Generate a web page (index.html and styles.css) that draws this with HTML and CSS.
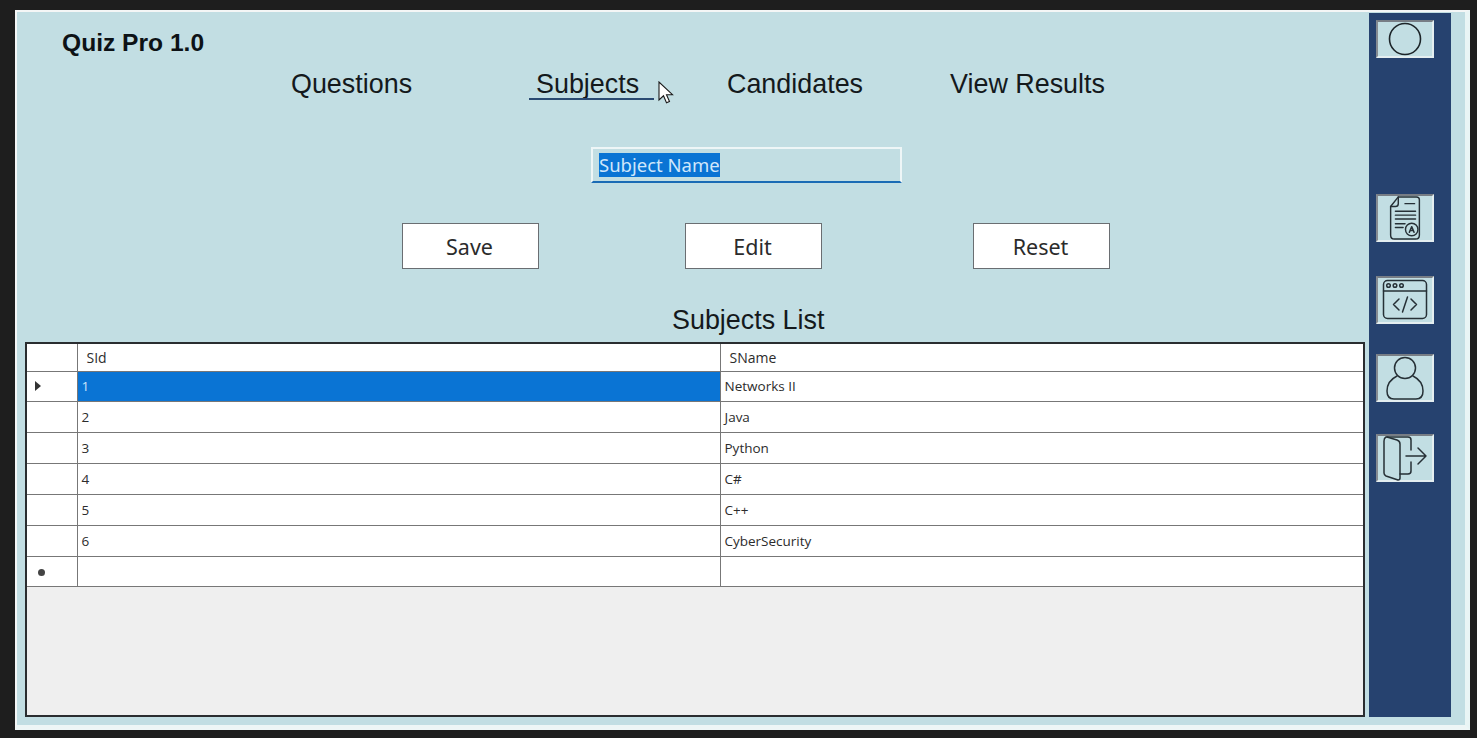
FILE: index.html
```html
<!DOCTYPE html>
<html lang="en">
<head>
<meta charset="utf-8">
<title>Quiz Pro 1.0</title>
<link rel="stylesheet" href="styles.css">
</head>
<body>
<div class="window">
  <main class="main">
    <div class="title">Quiz Pro 1.0</div>
    <nav class="nav">
      <a class="nav-item nav-questions">Questions</a>
      <a class="nav-item nav-subjects">Subjects</a>
      <a class="nav-item nav-candidates">Candidates</a>
      <a class="nav-item nav-results">View Results</a>
    </nav>
    <svg class="cursor" width="16" height="24" viewBox="0 0 16 24"><path d="M1 1v18l4.5-4.2 3 7 3-1.3-3-6.8H14.500z" fill="#fff" stroke="#1a1a1a" stroke-width="1.100"/></svg>
    <div class="field-row">
      <div class="field"><span class="selected">Subject Name</span></div>
    </div>
    <div class="actions">
      <button class="btn btn-save">Save</button>
      <button class="btn btn-edit">Edit</button>
      <button class="btn btn-reset">Reset</button>
    </div>
    <h2 class="list-title">Subjects List</h2>
    <div class="grid-box">
      <table class="grid">
        <thead>
          <tr><th class="rh"></th><th class="c1">SId</th><th class="c2">SName</th></tr>
        </thead>
        <tbody>
          <tr class="active"><td class="rh"><span class="arrow"></span></td><td class="sel">1</td><td>Networks II</td></tr>
          <tr><td class="rh"></td><td>2</td><td>Java</td></tr>
          <tr><td class="rh"></td><td>3</td><td>Python</td></tr>
          <tr><td class="rh"></td><td>4</td><td>C#</td></tr>
          <tr><td class="rh"></td><td>5</td><td>C++</td></tr>
          <tr><td class="rh"></td><td>6</td><td>CyberSecurity</td></tr>
          <tr><td class="rh"><span class="dot"></span></td><td></td><td></td></tr>
        </tbody>
      </table>
    </div>
  </main>
  <aside class="sidebar">
    <div class="tile tile-top">
      <svg width="34" height="34" viewBox="0 0 34 34"><circle cx="17" cy="17" r="15.500" fill="none" stroke="#1c2428" stroke-width="1.600"/></svg>
    </div>
    <div class="tile tile-doc">
      <svg width="36" height="46" viewBox="0 0 36 48" fill="none" stroke="#263036" stroke-width="1.500" stroke-linecap="round" stroke-linejoin="round">
        <path d="M11 2H30Q33 2 33 5V42Q33 46 29 46H7Q3 46 3 42V12Z"/>
        <path d="M11 2V9Q11 12 8 12H3"/>
        <path d="M18 9H28M8 17H29M8 21H29M8 25H29M8 30H18M8 34H16"/>
        <circle cx="25" cy="36" r="6.500"/>
        <path d="M22.500 39L25 33L27.500 39M23.500 37H26.500"/>
      </svg>
    </div>
    <div class="tile tile-code">
      <svg width="46" height="42" viewBox="0 0 46 42" fill="none" stroke="#263036" stroke-width="1.500" stroke-linecap="round" stroke-linejoin="round">
        <rect x="1.500" y="1.500" width="43" height="38" rx="4"/>
        <path d="M1.500 12H44.500"/>
        <circle cx="6.500" cy="6.500" r="1.800"/><circle cx="13" cy="6.500" r="1.800"/><circle cx="19.500" cy="6.500" r="1.800"/>
        <path d="M17 20L11.500 25.500L17 31M29 20L34.500 25.500L29 31M25.500 18L20.500 33"/>
      </svg>
    </div>
    <div class="tile tile-user">
      <svg width="40" height="46" viewBox="0 0 40 46" fill="none" stroke="#263036" stroke-width="1.500" stroke-linecap="round" stroke-linejoin="round">
        <circle cx="20" cy="13" r="10.500"/>
        <path d="M12 21C6 24 2 29 2 36Q2 44 9 44H31Q38 44 38 36C38 29 34 24 28 21"/>
      </svg>
    </div>
    <div class="tile tile-exit">
      <svg width="46" height="46" viewBox="0 0 46 46" fill="none" stroke="#263036" stroke-width="1.500" stroke-linecap="round" stroke-linejoin="round">
        <path d="M4 2Q2 3 2 6V38Q2 40 4 41L16 45Q18 45 18 43V9Q18 6 15 5L5 2Z"/>
        <path d="M5 2H26Q29 2 29 5V15M29 27V36Q29 39 26 39H18"/>
        <path d="M24 21H44M36 13L44 21L36 29"/>
      </svg>
    </div>
  </aside>
</div>
</body>
</html>
```
FILE: styles.css
```css
* { box-sizing: border-box; }
html, body { margin: 0; height: 738px; overflow: hidden; }
body {
  background: #1e1e1e;
  padding: 10px 7px 8px 15px;
  font-family: "Liberation Sans", Arial, sans-serif;
  color: #111;
}
.window {
  height: 720px;
  display: flex;
  background: #c2dee3;
  border: 2px solid #f4f6f6;
  border-right: 5px solid #e9f5f5;
  border-bottom: 5px solid #eef6f6;
  padding: 1px 14px 8px 8px;
  gap: 4px;
}
.main { position: relative; width: 1340px; display: flex; flex-direction: column; }
.title {
  margin: 16px 0 0 37px;
  height: 27px;
  line-height: 27px;
  font-size: 24.600px;
  font-weight: 700;
  color: #0d1216;
}
.nav { display: flex; height: 36px; margin-top: 13px; position: relative; }
.nav-item { font-size: 26.900px; line-height: 30px; color: #14191c; white-space: nowrap; }
.nav-questions { margin-left: 266px; width: 245px; }
.nav-subjects { width: 191px; position: relative; }
.nav-subjects::after {
  content: "";
  position: absolute;
  left: -7px; top: 29px;
  width: 125px; height: 2px;
  background: #2a4a72;
}
.nav-candidates { width: 223px; }
.cursor { position: absolute; left: 633px; top: 68px; }
.field-row { margin-top: 42px; padding-left: 566px; }
.field {
  width: 311px; height: 36px;
  border: 2px solid #eef6f7;
  border-bottom: 2px solid #1a6bb5;
  padding: 3px 0 0 6px;
  font-family: "Noto Sans", "Open Sans", sans-serif;
  font-size: 18.500px;
  line-height: 25px;
}
.selected { display: inline-block; background: #0a74d4; color: #cfe6fb; height: 24px; line-height: 24px; }
.actions { display: flex; margin-top: 40px; padding-left: 377px; }
.btn {
  width: 137px; height: 46px;
  background: #fff;
  border: 1px solid #6a6e72;
  font-family: "Noto Sans", "Open Sans", sans-serif;
  font-size: 21.500px;
  color: #2b2b2b;
  padding: 0 2px 0 0;
}
.btn-edit { margin-left: 146px; }
.btn-reset { margin-left: 151px; }
.list-title {
  margin: 35px 0 0;
  height: 38px;
  line-height: 32px;
  padding-left: 647px;
  font-size: 26.900px;
  font-weight: 400;
  color: #14191c;
}
.grid-box {
  width: 1340px; height: 375px;
  background: #efefef;
  border: 2px solid #2a2d30;
}
.grid { width: 1336px; border-collapse: collapse; table-layout: fixed; background: #fff; }
.grid th, .grid td {
  border: 1px solid #777;
  height: 31px;
  padding: 0 0 0 4px;
  font-family: "Open Sans", "Noto Sans", sans-serif;
  font-size: 13.500px;
  font-weight: 400;
  text-align: left;
  color: #2c2c2c;
}
.grid tbody tr:first-child td, .grid tbody tr:last-child td { height: 30px; }
.grid thead th { height: 27px; border-top: 0; padding-left: 9px; font-size: 14px; }
.grid tr > :first-child { border-left: 0; }
.grid tr > :last-child { border-right: 0; }
.grid .rh { width: 50px; padding-left: 8px; }
.grid .c1 { width: 643px; }
.grid td.sel { background: #0a74d4; color: #cde4fa; }
.arrow {
  display: block;
  width: 0; height: 0;
  border-left: 6px solid #333;
  border-top: 5px solid transparent;
  border-bottom: 5px solid transparent;
}
.dot { display: block; width: 7px; height: 7px; margin: 3px 0 0 3px; border-radius: 50%; background: #444; }
.sidebar {
  width: 82px;
  background: #26426f;
  display: flex;
  flex-direction: column;
  align-items: flex-start;
  padding: 7px 0 0 7px;
}
.tile {
  width: 58px; height: 48px;
  background: #c2dee3;
  border: 2px solid #e4eef0;
  border-top-color: #777d85;
  border-left-color: #858b92;
  display: flex;
  align-items: center;
  justify-content: center;
  flex: none;
}
.tile-top { height: 38px; }
.tile-doc { margin-top: 136px; }
.tile-code { margin-top: 34px; }
.tile-user { margin-top: 30px; }
.tile-exit { margin-top: 32px; }
```
